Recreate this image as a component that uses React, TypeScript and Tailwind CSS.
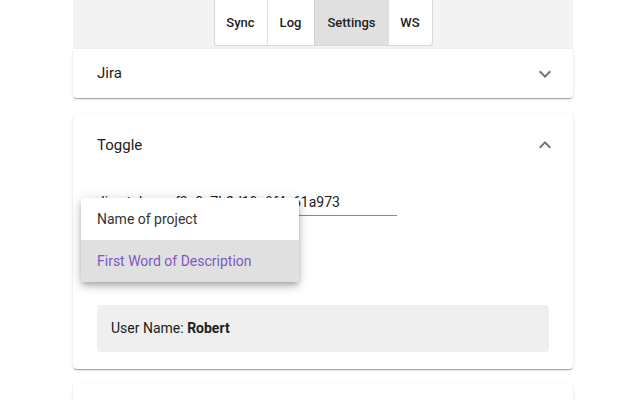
import React from "react";

const Chevron = ({ up }: { up?: boolean }) => (
  <svg width="24" height="24" viewBox="0 0 24 24" className={up ? "rotate-180" : ""}>
    <path fill="#757575" d="M16.59 8.59 12 13.17 7.41 8.59 6 10l6 6 6-6z" />
  </svg>
);

export default function App() {
  const paper =
    "bg-white rounded-[4px] shadow-[0px_2px_1px_-1px_rgba(0,0,0,0.2),0px_1px_1px_0px_rgba(0,0,0,0.14),0px_1px_3px_0px_rgba(0,0,0,0.12)]";
  return (
    <div className="relative w-[640px] h-[400px] overflow-hidden bg-white font-['Roboto',sans-serif] text-[#212121]">
      <div className="ml-[73px] w-[500px]">
        <div className="h-[49px] bg-[#f3f3f3] flex justify-center items-start">
          <div className="flex h-[46px] border border-t-0 border-[#d8d8d8] rounded-b-[4px] bg-white overflow-hidden text-[13px] font-medium text-[#222]">
            <div className="w-[53px] flex items-center justify-center border-r border-[#e0e0e0]">Sync</div>
            <div className="w-[47px] flex items-center justify-center border-r border-[#d0d0d0]">Log</div>
            <div className="w-[74px] flex items-center justify-center bg-[#e0e0e0]">Settings</div>
            <div className="w-[43px] flex items-center justify-center">WS</div>
          </div>
        </div>
        <div className={`${paper} rounded-t-none h-[49px] flex items-center justify-between pl-[24px] pr-[16px]`}>
          <span className="text-[15px]">Jira</span>
          <Chevron />
        </div>
        <div className={`${paper} mt-[15px] h-[256px] flex flex-col`}>
          <div className="h-[64px] flex items-center justify-between pl-[24px] pr-[16px]">
            <span className="text-[15px]">Toggle</span>
            <Chevron up />
          </div>
          <div className="px-[24px] pt-[12px]">
            <div className="w-[300px] border-b border-[#8a8a8a] text-[14px] leading-[20px] pb-[3px] pt-[3px]">
              Jira_token_af3e0c7b2d19e8f4c61a973
            </div>
          </div>
          <div className="mx-[24px] mt-[89px] h-[47px] bg-[#efefef] rounded-[4px] flex items-center px-[14px] text-[14px]">
            <span>User Name:&nbsp;</span>
            <span className="font-bold">Robert</span>
          </div>
        </div>
        <div className={`${paper} mt-[15px] h-[60px]`}></div>
      </div>
      <div className="absolute left-[81px] top-[198px] w-[218px] bg-white rounded-[4px] overflow-hidden shadow-[0px_3px_5px_-1px_rgba(0,0,0,0.2),0px_5px_8px_0px_rgba(0,0,0,0.14),0px_1px_14px_0px_rgba(0,0,0,0.12)] text-[14px]">
        <div className="h-[42px] flex items-center pl-[16px] text-[#333]">Name of project</div>
        <div className="h-[42px] flex items-center pl-[16px] bg-[#e0e0e0] text-[#7e57c2]">First Word of Description</div>
      </div>
    </div>
  );
}
